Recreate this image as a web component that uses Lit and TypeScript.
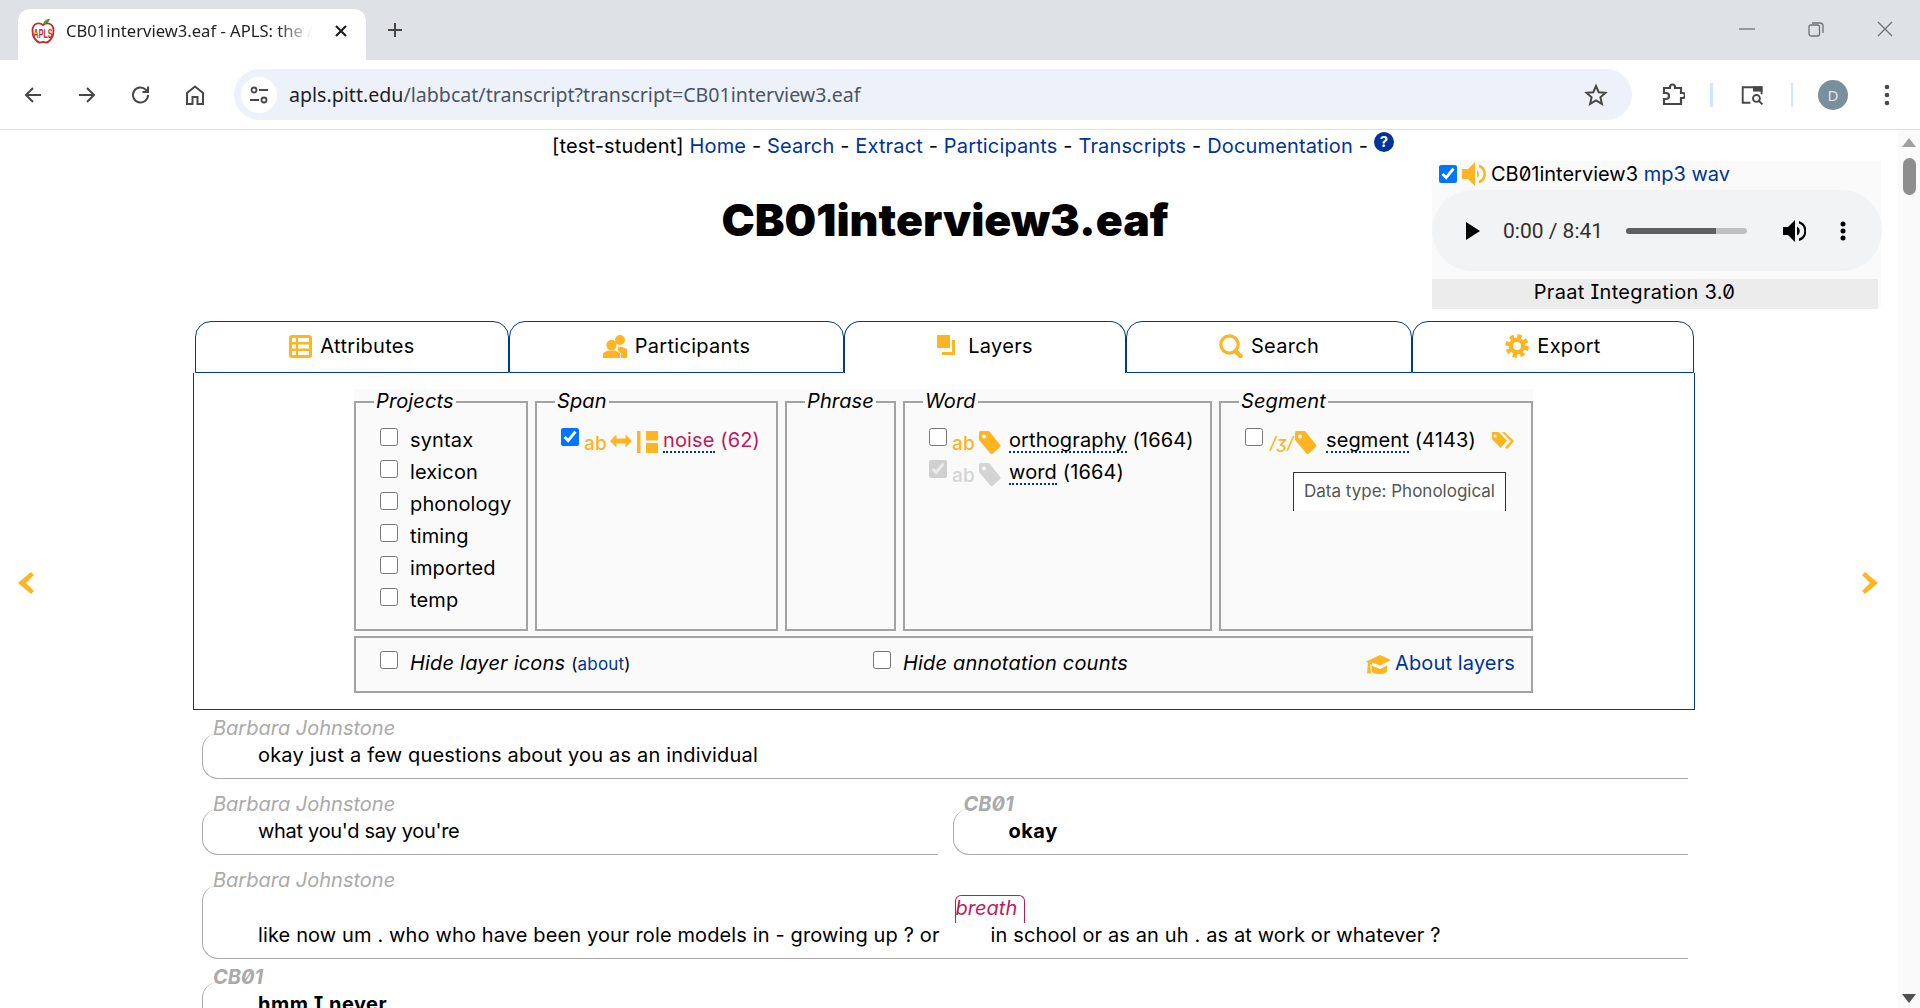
import { LitElement, html, css, svg } from 'lit';
import { customElement } from 'lit/decorators.js';

const YELLOW = '#ffb521';

const icons = {
    table: svg`<rect x="0" y="0" width="23" height="23" rx="3" fill="${YELLOW}"/><path d="M3 3h4v4H3zM3 9.500h4v4H3zM3 16h4v4H3zM9 3h11v4H9zM9 9.500h11v4H9zM9 16h11v4H9z" fill="#fff"/>`,
    people: svg`<circle cx="17" cy="6" r="5" fill="${YELLOW}"/><path d="M15 13h4l5 2v9h-6v-5l-3-2z" fill="${YELLOW}"/><circle cx="8.500" cy="11" r="5.200" fill="${YELLOW}"/><path d="M0 24v-5l5-2.500h7l5 2.500v6H0z" fill="${YELLOW}"/>`,
    layers: svg`<rect x="0" y="0" width="13" height="13" fill="${YELLOW}"/><path d="M15 5h3v15H5v-3h10z" fill="${YELLOW}"/>`,
    search: svg`<circle cx="10.500" cy="10.500" r="8.700" fill="none" stroke="${YELLOW}" stroke-width="3.200"/><path d="M16.500 17l5 5" stroke="${YELLOW}" stroke-width="4.500" stroke-linecap="round"/>`,
    gear: svg`<circle cx="12" cy="12" r="9.600" fill="none" stroke="${YELLOW}" stroke-width="4.400" stroke-dasharray="4.200 3.340"/><circle cx="12" cy="12" r="6.200" fill="none" stroke="${YELLOW}" stroke-width="4.400"/>`,
    tag: svg`<path fill-rule="evenodd" d="M2.500 0H11l11 13.500a2 2 0 0 1 0 2.500L15 22.500a2 2 0 0 1-2.800-.2L1 9V1.500A1.500 1.500 0 0 1 2.500 0zM6 3.500a2 2 0 1 0 0 4 2 2 0 0 0 0-4z"/>`,
    tags: svg`<path fill-rule="evenodd" d="M1 1h6.500L16 9.500 9.500 17 1 8zM4 3.500a1.500 1.500 0 1 0 0 3 1.500 1.500 0 0 0 0-3z"/><path d="M11 1h2.500L23 10l-7 8-2-1.500 5.800-6.500z"/>`,
    arrows: svg`<path d="M0 8l6.500-6.500v4h9v-4L22 8l-6.500 6.500v-4h-9v4z"/>`,
    bar: svg`<rect x="0" y="0" width="3.500" height="22"/><rect x="9" y="0" width="12" height="9.500"/><rect x="9" y="12" width="12" height="10"/>`,
    hat: svg`<path d="M0 8.500L14 2l11 5-11 5.500L6 9.500v2.500z"/><path d="M5.500 12.500l8.500 3.500 7-3.500v6c-3 3.500-12 3.500-15.500 0z"/><path d="M2 9.500h2l1 11H1z"/>`,
};

interface Layer {
    icon: string;
    glyph: string;
    name: string;
    count: string;
    checked?: boolean;
    disabled?: boolean;
    crimson?: boolean;
}

const PROJECTS = ['syntax', 'lexicon', 'phonology', 'timing', 'imported', 'temp'];

const SPAN: Layer[] = [
    { icon: 'ab', glyph: 'span', name: 'noise', count: '(62)', checked: true, crimson: true },
];

const WORD: Layer[] = [
    { icon: 'ab', glyph: 'tag', name: 'orthography', count: '(1664)' },
    { icon: 'ab', glyph: 'tag', name: 'word', count: '(1664)', checked: true, disabled: true },
];

@customElement('browser-chrome')
export class BrowserChrome extends LitElement {
    static styles = css`
        :host {
            display: block;
            font-family: 'Noto Sans', sans-serif;
            font-feature-settings: normal;
            letter-spacing: 0;
        }

        .strip {
            height: 60px;
            background: #dee1e6;
            display: flex;
            align-items: flex-end;
        }

        .tab {
            width: 348px;
            height: 51px;
            margin-left: 18px;
            background: #fff;
            border-radius: 12px 12px 0 0;
            display: flex;
            align-items: center;
            box-sizing: border-box;
            padding: 0 0 8px 13px;
        }

        .tab-title {
            font-size: 16.600px;
            color: #1f1f1f;
            margin-left: 11px;
            width: 246px;
            white-space: nowrap;
            overflow: hidden;
            -webkit-mask-image: linear-gradient(to right, #000 86%, transparent);
            mask-image: linear-gradient(to right, #000 86%, transparent);
        }

        .tab-close {
            margin-left: 22px;
        }

        .plus {
            margin: 0 0 22px 21px;
        }

        .window {
            margin: 0 27px 23px auto;
            display: flex;
            gap: 53px;
            align-items: center;
        }

        .toolbar {
            height: 69px;
            background: #fff;
            border-radius: 12px 12px 0 0;
            border-bottom: 1px solid #e0e0e0;
            display: flex;
            align-items: center;
        }

        .nav-icon {
            width: 24px;
            height: 24px;
            margin-left: 30px;
            flex: none;
        }

        .nav-icon:first-child {
            margin-left: 21px;
        }

        .omnibox {
            width: 1398px;
            height: 51px;
            margin-left: 27px;
            background: #edf2fa;
            border-radius: 26px;
            display: flex;
            align-items: center;
        }

        .site {
            width: 36px;
            height: 36px;
            margin-left: 7px;
            border-radius: 50%;
            background: #fff;
            display: flex;
            align-items: center;
            justify-content: center;
        }

        .url {
            margin-left: 12px;
            font-size: 19.600px;
            color: #4b5563;
        }

        .url b {
            font-weight: 400;
            color: #1f1f1f;
        }

        .star {
            margin-left: auto;
            margin-right: 24px;
        }

        .sep {
            width: 2.500px;
            height: 24px;
            background: #d3e3fd;
            flex: none;
        }

        .avatar {
            width: 30px;
            height: 30px;
            border-radius: 50%;
            background: #78909c;
            color: #dfe6ea;
            font-size: 15px;
            display: flex;
            align-items: center;
            justify-content: center;
            margin-left: 25px;
        }

        svg {
            display: block;
        }
    `;

    render() {
        return html`
            <div class="strip">
                <div class="tab">
                    <svg width="24" height="26" viewBox="0 0 24 26">
                        <path d="M12 7C8 4 2 5 1.500 12c-.5 6 3.500 12 7 12.500 1.500.2 2.500-.5 3.500-.5s2 .7 3.500.5c3.500-.5 7.500-6.500 7-12.500C22 5 16 4 12 7z" fill="#fff" stroke="#c62828" stroke-width="1.800"/>
                        <path d="M12 6c1-3 3-5 7-5-1 3-3 5-7 5z" fill="#4c9a2a"/>
                        <text x="12" y="20" text-anchor="middle" font-size="12" font-family="Liberation Sans" font-weight="700" fill="#c62828" textLength="19" lengthAdjust="spacingAndGlyphs">APLS</text>
                    </svg>
                    <span class="tab-title">CB01interview3.eaf - APLS: the Archive of Pittsburgh</span>
                    <svg class="tab-close" width="14" height="14" viewBox="0 0 14 14"><path d="M2 2l10 10M12 2L2 12" stroke="#1f1f1f" stroke-width="2.200"/></svg>
                </div>
                <svg class="plus" width="16" height="16" viewBox="0 0 16 16"><path d="M8 1v14M1 8h14" stroke="#474747" stroke-width="2"/></svg>
                <div class="window">
                    <svg width="16" height="16" viewBox="0 0 16 16"><path d="M0 8h16" stroke="#6d7278" stroke-width="1.300"/></svg>
                    <svg width="16" height="16" viewBox="0 0 16 16"><rect x="1" y="4" width="10.500" height="11" rx="2" fill="none" stroke="#6d7278" stroke-width="1.300"/><path d="M4 2h8a3 3 0 0 1 3 3v7" fill="none" stroke="#6d7278" stroke-width="1.300"/></svg>
                    <svg width="16" height="16" viewBox="0 0 16 16"><path d="M1 1l14 14M15 1L1 15" stroke="#6d7278" stroke-width="1.300"/></svg>
                </div>
            </div>
            <div class="toolbar">
                <svg class="nav-icon" viewBox="0 0 24 24"><path d="M20 12H5M12 5l-7 7 7 7" fill="none" stroke="#474747" stroke-width="2"/></svg>
                <svg class="nav-icon" viewBox="0 0 24 24"><path d="M4 12h15M12 5l7 7-7 7" fill="none" stroke="#474747" stroke-width="2"/></svg>
                <svg class="nav-icon" viewBox="0 0 24 24"><path d="M19 12a7.500 7.500 0 1 1-2.200-5.300L19 9M19 3.500V9h-5.500" fill="none" stroke="#474747" stroke-width="2"/></svg>
                <svg class="nav-icon" viewBox="0 0 24 24"><path d="M4 21V10l8-6.500 8 6.500v11h-5.500v-7h-5v7z" fill="none" stroke="#474747" stroke-width="2"/></svg>
                <div class="omnibox">
                    <div class="site">
                        <svg width="20" height="20" viewBox="0 0 20 20"><circle cx="5" cy="5" r="2.500" fill="none" stroke="#474747" stroke-width="1.800"/><path d="M10 5h9M1 15h9" stroke="#474747" stroke-width="1.800"/><circle cx="15" cy="15" r="2.500" fill="none" stroke="#474747" stroke-width="1.800"/></svg>
                    </div>
                    <span class="url"><b>apls.pitt.edu</b>/labbcat/transcript?transcript=CB01interview3.eaf</span>
                    <svg class="star" width="24" height="24" viewBox="0 0 24 24"><path d="M12 3l2.700 6.200 6.800.6-5.100 4.500 1.500 6.600L12 17.400l-5.900 3.500 1.500-6.600-5.100-4.500 6.800-.6z" fill="none" stroke="#474747" stroke-width="2"/></svg>
                </div>
                <svg class="nav-icon" style="margin-left:29px" viewBox="0 0 24 24"><path d="M3 5h6V4a2.500 2.500 0 0 1 5 0v1h6v5h1.500a2.500 2.500 0 0 1 0 5H20v6H3v-5h2a2.500 2.500 0 0 0 0-6H3z" fill="none" stroke="#474747" stroke-width="2.200"/></svg>
                <div class="sep" style="margin-left:25px"></div>
                <svg class="nav-icon" style="margin-left:28px" viewBox="0 0 28 24"><path d="M11 21H2V3h22v8" fill="none" stroke="#474747" stroke-width="2.200"/><rect x="14" y="2" width="11" height="6" fill="#474747"/><circle cx="18" cy="16" r="4" fill="none" stroke="#474747" stroke-width="2.200"/><path d="M21 19l4 4" stroke="#474747" stroke-width="2.200"/></svg>
                <div class="sep" style="margin-left:26px"></div>
                <div class="avatar">D</div>
                <svg class="nav-icon" style="margin-left:36px;width:6px" viewBox="0 0 6 24"><circle cx="3" cy="4" r="2.300" fill="#474747"/><circle cx="3" cy="12" r="2.300" fill="#474747"/><circle cx="3" cy="20" r="2.300" fill="#474747"/></svg>
            </div>
        `;
    }
}

@customElement('app-root')
export class AppRoot extends LitElement {
    static styles = css`
        :host {
            display: block;
            width: 1920px;
            height: 1008px;
            overflow: hidden;
            background: #fff;
            font-family: Inter, 'Liberation Sans', sans-serif;
            font-size: 20px;
            font-feature-settings: 'zero', 'cv08';
            letter-spacing: 0.13px;
            color: #000;
        }

        a {
            color: #003399;
            text-decoration: none;
        }

        svg {
            display: block;
            flex: none;
        }

        input[type='checkbox'] {
            width: 18px;
            height: 18px;
            margin: 0;
            flex: none;
        }

        .body {
            display: flex;
            height: 878px;
        }

        .page {
            width: 1898px;
            height: 878px;
            overflow: hidden;
            position: relative;
        }

        .scrollbar {
            width: 22px;
            background: #fafafa;
            display: flex;
            flex-direction: column;
            align-items: center;
        }

        .scroll-up {
            margin-top: 8px;
            width: 0;
            height: 0;
            border-left: 7px solid transparent;
            border-right: 7px solid transparent;
            border-bottom: 9px solid #a0a0a0;
        }

        .scroll-thumb {
            width: 13px;
            height: 37px;
            margin-top: 11px;
            border-radius: 7px;
            background: #8e8e8e;
        }

        .scroll-down {
            margin-top: auto;
            margin-bottom: 5px;
            width: 0;
            height: 0;
            border-left: 7px solid transparent;
            border-right: 7px solid transparent;
            border-top: 9px solid #505050;
        }

        .top-nav {
            height: 30px;
            padding-left: 48px;
            display: flex;
            justify-content: center;
            line-height: 32px;
            letter-spacing: 0.15px;
            white-space: pre;
        }

        .help {
            width: 20px;
            height: 20px;
            margin: 2px 0 0 6px;
            border-radius: 50%;
            background: #003399;
            color: #fff;
            font-size: 15px;
            font-weight: 700;
            line-height: 20px;
            text-align: center;
        }

        h1 {
            margin: 36px 8px 0 0;
            font-size: 44.600px;
            line-height: 48px;
            font-weight: 900;
            letter-spacing: 0;
            text-align: center;
            font-feature-settings: normal;
        }

        /* floating media player, top right */
        .player {
            position: absolute;
            left: 1432px;
            top: 31px;
            width: 449px;
            height: 148px;
            background: #fafafa;
            letter-spacing: 0;
        }

        .player-head {
            height: 29px;
            box-sizing: border-box;
            padding: 0 0 4px 7px;
            display: flex;
            align-items: center;
            white-space: pre;
        }

        .player-head svg {
            margin: 0 5px;
        }

        .audio {
            width: 450px;
            height: 81px;
            border-radius: 41px;
            background: #f1f3f4;
            display: flex;
            align-items: center;
        }

        .time {
            margin-left: 23px;
            font-family: Roboto, sans-serif;
            font-size: 21px;
            color: #303030;
            font-feature-settings: normal;
            width: 100px;
            white-space: nowrap;
        }

        .track {
            width: 121px;
            height: 6px;
            margin-left: 23px;
            border-radius: 3px;
            background: #c0c0c0;
            overflow: hidden;
        }

        .track div {
            width: 90px;
            height: 6px;
            background: #5f5f5f;
        }

        .praat {
            width: 446px;
            height: 30px;
            margin-top: 8px;
            padding-right: 41px;
            box-sizing: border-box;
            background: #ececec;
            line-height: 26px;
            letter-spacing: 0.3px;
            text-align: center;
        }

        .tabs {
            margin: 77px 0 0 195px;
            width: 1499px;
            display: grid;
            grid-template-columns: 314px 335px 282px 286px 282px;
            height: 52px;
        }

        .tab {
            border: 1px solid #003a8c;
            border-radius: 16px 16px 0 0;
            display: flex;
            align-items: center;
            justify-content: center;
            gap: 8px;
            letter-spacing: 0.3px;
            padding-bottom: 2px;
            box-sizing: border-box;
        }

        .tab.active {
            border-bottom: none;
            gap: 13px;
            padding-bottom: 3px;
        }

        .tab.active svg {
            margin-bottom: 3px;
        }

        .panel {
            width: 1502px;
            height: 337px;
            margin-left: 193px;
            border: 1px solid #003a8c;
            border-top: none;
            padding-top: 16px;
            box-sizing: border-box;
        }

        .layers {
            width: 1179px;
            height: 304px;
            margin-left: 160px;
            background: #fafafa;
        }

        .sets {
            display: flex;
            gap: 7px;
            height: 242px;
        }

        fieldset {
            margin: 0;
            padding: 9px 0 0 24px;
            border: 2px solid #a3a3a3;
            box-sizing: border-box;
            min-width: 0;
        }

        legend {
            font-style: italic;
            line-height: 24px;
            padding: 0 2px 2px;
            margin-left: -6px;
        }

        .row {
            height: 32px;
            display: flex;
            align-items: center;
            position: relative;
        }

        .row input {
            align-self: flex-start;
            margin-top: 4px;
        }

        .plain {
            margin-left: 12px;
            white-space: pre;
        }

        .ab {
            margin: 6px 0 0 5px;
            width: 26px;
            font-size: 19px;
            font-weight: 500;
            color: #ffb521;
            white-space: nowrap;
        }

        .ab.phon {
            font-style: italic;
            font-size: 17px;
            width: 24px;
            margin-left: 7px;
        }

        .glyph {
            fill: #ffb521;
        }

        .marks {
            display: flex;
            align-items: center;
        }

        .marks.off .ab {
            color: #d4d4d4;
        }

        .marks.off .glyph {
            fill: #d4d4d4;
        }

        .label {
            white-space: pre;
            line-height: 24px;
        }

        .name {
            display: inline-block;
            border-bottom: 2px dotted #003399;
            line-height: 22px;
        }

        .crimson {
            color: #c2185b;
        }

        .tooltip {
            position: absolute;
            left: 48px;
            top: 48px;
            width: 211px;
            height: 38px;
            border: 1px solid #333;
            border-bottom: none;
            background: #fff;
            color: #555;
            font-size: 17px;
            letter-spacing: 0;
            line-height: 36px;
            text-align: center;
        }

        .options {
            height: 57px;
            margin-top: 5px;
            border: 2px solid #a3a3a3;
            box-sizing: border-box;
            padding: 0 16px 3px 24px;
            display: grid;
            grid-template-columns: 493px 1fr auto;
            align-items: center;
            font-style: italic;
            letter-spacing: 0.2px;
        }

        .options > div {
            display: flex;
            align-items: center;
        }

        .options input {
            margin-top: -6px;
        }

        .options small {
            font-size: 17px;
            font-style: normal;
        }

        .about {
            gap: 4px;
            font-style: normal;
            letter-spacing: 0.13px;
        }

        .chevron {
            position: absolute;
            top: 442px;
        }

        .transcript {
            width: 1486px;
            margin: 6px 0 0 202px;
            display: flex;
            flex-direction: column;
        }

        .turns {
            display: flex;
            gap: 15px;
            margin-bottom: 13px;
        }

        .turns.close {
            margin-bottom: 6px;
        }

        .turn {
            flex: 1;
            min-width: 0;
        }

        .speaker {
            padding-left: 11px;
            line-height: 24px;
            font-style: italic;
            color: #aaa;
            letter-spacing: 0;
            white-space: nowrap;
        }

        .speaker.target {
            font-weight: 700;
        }

        .utterance {
            margin-top: -7px;
            padding: 10px 0 11px 55px;
            border-left: 1px solid #aaa;
            border-bottom: 1px solid #aaa;
            border-radius: 16px 0 0 16px;
            line-height: 24px;
            letter-spacing: 0.18px;
            white-space: pre;
            display: flex;
        }

        .utterance.target {
            font-weight: 700;
            letter-spacing: 0.5px;
        }

        .utterance.tall {
            padding-top: 38px;
            letter-spacing: 0.13px;
        }

        .utterance.tight {
            letter-spacing: -0.3px;
        }

        .noise-anchor {
            margin-left: 51px;
            position: relative;
        }

        .noise-tag {
            position: absolute;
            left: -36px;
            top: -28px;
            width: 68px;
            height: 27px;
            border: 1px solid #c2185b;
            border-bottom: none;
            border-radius: 6px 6px 0 0;
            color: #c2185b;
            font-style: italic;
            letter-spacing: 0;
            line-height: 25px;
        }
    `;

    private icon(shape: unknown, w: number, h: number) {
        return html`<svg width=${w} height=${h} viewBox="0 0 ${w} ${h}">${shape}</svg>`;
    }

    private glyph(name: string) {
        if (name === 'span') {
            return html`
                <svg class="glyph" width="22" height="16" viewBox="0 0 22 16" style="margin:2px 5px 0 0">${icons.arrows}</svg>
                <svg class="glyph" width="21" height="22" viewBox="0 0 21 22" style="margin:4px 5px 0 0">${icons.bar}</svg>
            `;
        }
        return html`<svg class="glyph" width="23" height="23" viewBox="0 0 23 23" style="margin:4px 8px 0 0">${icons.tag}</svg>`;
    }

    private layerRow(layer: Layer) {
        return html`
            <div class="row ${layer.crimson ? 'crimson' : ''}">
                <input type="checkbox" ?checked=${layer.checked} ?disabled=${layer.disabled} />
                <div class="marks ${layer.disabled ? 'off' : ''}">
                    <span class="ab">${layer.icon}</span>
                    ${this.glyph(layer.glyph)}
                </div>
                <span class="label"><span class="name">${layer.name}</span> ${layer.count}</span>
            </div>
        `;
    }

    render() {
        return html`
            <browser-chrome></browser-chrome>
            <div class="body">
                <div class="page">
                    <div class="top-nav">
                        <span>[test-student] <a>Home</a> - <a>Search</a> - <a>Extract</a> - <a>Participants</a> - <a>Transcripts</a> - <a>Documentation</a> -</span>
                        <div class="help">?</div>
                    </div>
                    <h1>CB01interview3.eaf</h1>

                    <div class="player">
                        <div class="player-head">
                            <input type="checkbox" checked />
                            <svg width="24" height="24" viewBox="0 0 24 24"><path d="M0 7h6l7-7v24l-7-7H0z" fill="${YELLOW}"/><path d="M15 8a5 5 0 0 1 0 8z" fill="${YELLOW}"/><path d="M17 2.500a10 10 0 0 1 0 19v-3a7 7 0 0 0 0-13z" fill="${YELLOW}"/></svg>
                            <span>CB01interview3 <a>mp3</a> <a>wav</a></span>
                        </div>
                        <div class="audio">
                            <svg style="margin-left:34px" width="14" height="18" viewBox="0 0 14 18"><path d="M0 0l14 9-14 9z" fill="#000"/></svg>
                            <span class="time">0:00 / 8:41</span>
                            <div class="track"><div></div></div>
                            <svg style="margin-left:35px" width="24" height="24" viewBox="0 0 24 24"><path d="M1 8h5l7-7v22l-7-7H1z" fill="#000"/><path d="M15 7.500a5 5 0 0 1 0 9z" fill="#000"/><path d="M17 2a10.500 10.500 0 0 1 0 20v-2.500a8 8 0 0 0 0-15z" fill="#000"/></svg>
                            <svg style="margin-left:34px" width="6" height="20" viewBox="0 0 6 20"><circle cx="3" cy="3" r="2.500" fill="#000"/><circle cx="3" cy="10" r="2.500" fill="#000"/><circle cx="3" cy="17" r="2.500" fill="#000"/></svg>
                        </div>
                        <div class="praat">Praat Integration 3.0</div>
                    </div>

                    <div class="tabs">
                        <div class="tab">${this.icon(icons.table, 23, 23)}Attributes</div>
                        <div class="tab">${this.icon(icons.people, 24, 24)}Participants</div>
                        <div class="tab active">${this.icon(icons.layers, 18, 20)}Layers</div>
                        <div class="tab">${this.icon(icons.search, 24, 24)}Search</div>
                        <div class="tab">${this.icon(icons.gear, 24, 24)}Export</div>
                    </div>

                    <div class="panel">
                        <div class="layers">
                            <div class="sets">
                                <fieldset style="width:174px">
                                    <legend>Projects</legend>
                                    ${PROJECTS.map(p => html`
                                        <div class="row"><input type="checkbox" /><span class="plain">${p}</span></div>
                                    `)}
                                </fieldset>
                                <fieldset style="width:243px">
                                    <legend>Span</legend>
                                    ${SPAN.map(l => this.layerRow(l))}
                                </fieldset>
                                <fieldset style="width:111px">
                                    <legend>Phrase</legend>
                                </fieldset>
                                <fieldset style="width:309px">
                                    <legend>Word</legend>
                                    ${WORD.map(l => this.layerRow(l))}
                                </fieldset>
                                <fieldset style="width:314px">
                                    <legend>Segment</legend>
                                    <div class="row">
                                        <input type="checkbox" />
                                        <span class="ab phon">/ʒ/</span>
                                        <svg class="glyph" width="23" height="23" viewBox="0 0 23 23" style="margin:4px 9px 0 0">${icons.tag}</svg>
                                        <span class="label"><span class="name">segment</span> (4143)</span>
                                        <svg class="glyph" width="24" height="19" viewBox="0 0 24 19" style="margin-left:15px">${icons.tags}</svg>
                                        <div class="tooltip">Data type: Phonological</div>
                                    </div>
                                </fieldset>
                            </div>
                            <div class="options">
                                <div><input type="checkbox" /><span class="plain">Hide layer icons <small>(<a>about</a>)</small></span></div>
                                <div><input type="checkbox" /><span class="plain">Hide annotation counts</span></div>
                                <div class="about">
                                    <svg class="glyph" width="25" height="21" viewBox="0 0 25 21">${icons.hat}</svg>
                                    <a>About layers</a>
                                </div>
                            </div>
                        </div>
                    </div>

                    <svg class="chevron" style="left:18px" width="16" height="22" viewBox="0 0 16 22"><path d="M16 3l-8 8 8 8-3 3L0 11 13 0z" fill="${YELLOW}"/></svg>
                    <svg class="chevron" style="left:1862px" width="16" height="22" viewBox="0 0 16 22"><path d="M0 3l8 8-8 8 3 3 13-11L3 0z" fill="${YELLOW}"/></svg>

                    <div class="transcript">
                        <div class="turns">
                            <div class="turn">
                                <div class="speaker">Barbara Johnstone</div>
                                <div class="utterance">okay just a few questions about you as an individual</div>
                            </div>
                        </div>
                        <div class="turns">
                            <div class="turn">
                                <div class="speaker">Barbara Johnstone</div>
                                <div class="utterance tight">what you'd say you're</div>
                            </div>
                            <div class="turn">
                                <div class="speaker target">CB01</div>
                                <div class="utterance target">okay</div>
                            </div>
                        </div>
                        <div class="turns close">
                            <div class="turn">
                                <div class="speaker">Barbara Johnstone</div>
                                <div class="utterance tall"><span>like now um . who who have been your role models in - growing up ? or</span><span class="noise-anchor"><span class="noise-tag">breath</span>in school or as an uh . as at work or whatever ?</span></div>
                            </div>
                        </div>
                        <div class="turns">
                            <div class="turn">
                                <div class="speaker target">CB01</div>
                                <div class="utterance target">hmm I never</div>
                            </div>
                        </div>
                    </div>
                </div>
                <div class="scrollbar">
                    <div class="scroll-up"></div>
                    <div class="scroll-thumb"></div>
                    <div class="scroll-down"></div>
                </div>
            </div>
        `;
    }
}
